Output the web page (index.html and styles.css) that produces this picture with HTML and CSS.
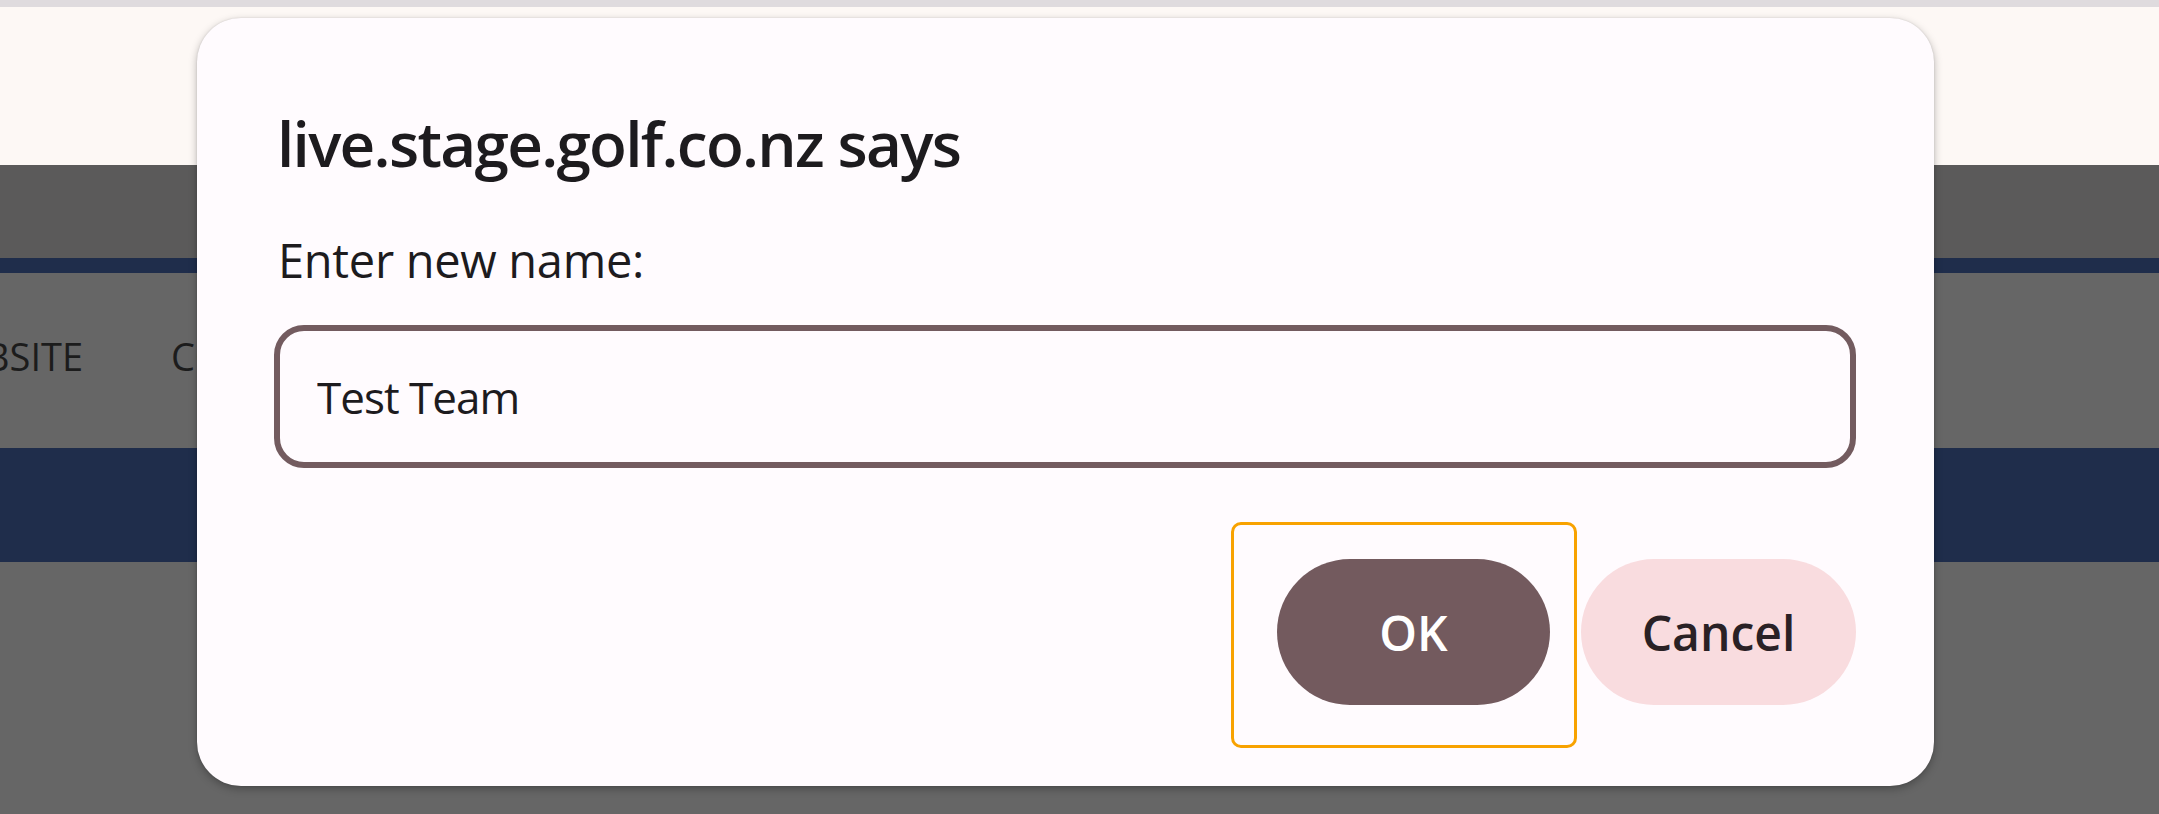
FILE: index.html
```html
<!DOCTYPE html>
<html lang="en">
<head>
<meta charset="utf-8">
<title>Prompt dialog</title>
<link rel="stylesheet" href="styles.css">
</head>
<body>
  <div class="screen">
    <div class="tabstrip"></div>
    <div class="toolbar"></div>
    <main class="page">
      <div class="site-header"></div>
      <div class="stripe"></div>
      <nav class="site-nav">
        <span class="nav-item nav-item--first">BSITE</span>
        <span class="nav-item">CONTACT</span>
      </nav>
      <div class="band"></div>
      <div class="rest"></div>
    </main>

    <div class="dialog" role="dialog" aria-labelledby="dlg-title">
      <h1 class="dialog-title" id="dlg-title">live.stage.golf.co.nz says</h1>
      <label class="dialog-label" for="dlg-input">Enter new name:</label>
      <input class="dialog-input" id="dlg-input" type="text" value="Test Team">
      <div class="dialog-actions">
        <span class="focus-ring"></span>
        <button class="btn btn-primary" type="button">OK</button>
        <button class="btn btn-secondary" type="button">Cancel</button>
      </div>
    </div>
  </div>
</body>
</html>
```

FILE: styles.css
```css
html, body {
  margin: 0;
  padding: 0;
}

body {
  width: 2159px;
  height: 814px;
  overflow: hidden;
  font-family: "Segoe UI", "Open Sans", "Noto Sans", sans-serif;
}

.screen {
  position: relative;
  width: 2159px;
  height: 814px;
  display: flex;
  flex-direction: column;
  overflow: hidden;
}

.tabstrip {
  height: 7px;
  background: #dfdbde;
}

.toolbar {
  height: 158px;
  background: #fdf8f5;
}

.page {
  flex: 1;
  display: flex;
  flex-direction: column;
}

.site-header {
  height: 93px;
  background: #5b5a5a;
}

.stripe {
  height: 15px;
  background: #1f2d4b;
}

.site-nav {
  height: 175px;
  box-sizing: border-box;
  padding-bottom: 10px;
  background: #666666;
  display: flex;
  align-items: center;
  gap: 88px;
}

.nav-item {
  font-family: "Open Sans", sans-serif;
  font-size: 38px;
  font-weight: 400;
  color: #1c1c1c;
  white-space: nowrap;
}

.nav-item--first {
  margin-left: -15px;
}

.band {
  height: 114px;
  background: #1f2d4b;
}

.rest {
  flex: 1;
  background: #666666;
}

/* Dialog */
.dialog {
  position: absolute;
  left: 197px;
  top: 18px;
  width: 1737px;
  height: 768px;
  box-sizing: border-box;
  padding: 85px 78px 81px 77px;
  background: #fffbfe;
  border-radius: 44px;
  box-shadow: 0 3px 8px rgba(0, 0, 0, 0.28), 0 0 2px rgba(0, 0, 0, 0.12);
  display: flex;
  flex-direction: column;
  font-family: "Open Sans", sans-serif;
  color: #1d1b1e;
}

.dialog-title {
  margin: 0;
  padding-left: 3px;
  font-size: 62px;
  line-height: 80px;
  font-weight: 600;
  letter-spacing: -1.7px;
}

.dialog-label {
  margin-top: 47px;
  padding-left: 4px;
  font-size: 47px;
  line-height: 60px;
  font-weight: 400;
  letter-spacing: -0.3px;
  color: #1d1b1e;
}

.dialog-input {
  margin: 35px 0 0 0;
  height: 143px;
  box-sizing: border-box;
  border: 6px solid #735b5f;
  border-radius: 30px;
  padding: 0 0 0 37px;
  background: #fffbfe;
  font-family: "Open Sans", sans-serif;
  font-size: 44px;
  letter-spacing: -1px;
  color: #1d1b1e;
  outline: none;
}

.dialog-actions {
  position: relative;
  margin-top: 91px;
  display: flex;
  justify-content: flex-end;
  gap: 31px;
}

.btn {
  height: 146px;
  border: none;
  border-radius: 73px;
  font-family: "Open Sans", sans-serif;
  font-size: 48px;
  font-weight: 600;
  padding: 0;
  cursor: pointer;
}

.btn-primary {
  width: 273px;
  background: #735a5e;
  color: #ffffff;
}

.btn-secondary {
  width: 275px;
  background: #f9dcdf;
  color: #2a2125;
}

.focus-ring {
  position: absolute;
  right: 279px;
  top: -37px;
  width: 346px;
  height: 226px;
  box-sizing: border-box;
  border: 3px solid #f8a200;
  border-radius: 10px;
  pointer-events: none;
}
```
